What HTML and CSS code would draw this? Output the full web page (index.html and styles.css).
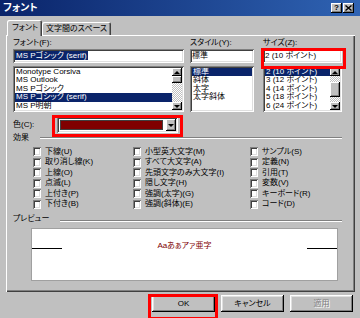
FILE: index.html
```html
<!DOCTYPE html>
<html lang="ja">
<head>
    <meta charset="UTF-8">
    <meta name="viewport" content="width=device-width, initial-scale=1.0">
    <title>フォント</title>
    <link rel="stylesheet" href="styles.css">
</head>
<body>
    <div class="dialog">
        <div class="titlebar">
            <span class="title">フォント</span>
            <div class="title-btns">
                <span class="tbtn">?</span>
                <span class="tbtn">
                    <svg width="7" height="6" viewBox="0 0 7 6"><path d="M0.5 0.5 L6.5 5.5 M6.5 0.5 L0.5 5.5" stroke="#000" stroke-width="1.4"/></svg>
                </span>
            </div>
        </div>

        <div class="tabs">
            <div class="tab active">フォント</div>
            <div class="tab">文字間のスペース</div>
        </div>

        <div class="panel">
            <div class="top-row">
                <div class="col col-font">
                    <div class="label">フォント(F):</div>
                    <div class="field"><span class="sel-text">MS Pゴシック (serif)</span></div>
                    <div class="listbox">
                        <ul class="items">
                            <li>Monotype Corsiva</li>
                            <li>MS Outlook</li>
                            <li>MS Pゴシック</li>
                            <li class="sel">MS Pゴシック (serif)</li>
                            <li>MS P明朝</li>
                        </ul>
                        <div class="scrollbar">
                            <div class="sb-btn up"></div>
                            <div class="sb-track"><div class="sb-thumb thumb-font"></div></div>
                            <div class="sb-btn down"></div>
                        </div>
                    </div>
                </div>

                <div class="col col-style">
                    <div class="label">スタイル(Y):</div>
                    <div class="field">標準</div>
                    <div class="listbox">
                        <ul class="items">
                            <li class="sel">標準</li>
                            <li>斜体</li>
                            <li>太字</li>
                            <li>太字斜体</li>
                        </ul>
                    </div>
                </div>

                <div class="col col-size">
                    <div class="label">サイズ(Z):</div>
                    <div class="field hl-wrap">2 (10 ポイント)<span class="hl hl-size"></span></div>
                    <div class="listbox">
                        <ul class="items">
                            <li class="sel">2 (10 ポイント)</li>
                            <li>3 (12 ポイント)</li>
                            <li>4 (14 ポイント)</li>
                            <li>5 (18 ポイント)</li>
                            <li>6 (24 ポイント)</li>
                        </ul>
                        <div class="scrollbar">
                            <div class="sb-btn up"></div>
                            <div class="sb-track"><div class="sb-thumb thumb-size"></div></div>
                            <div class="sb-btn down"></div>
                        </div>
                    </div>
                </div>
            </div>

            <div class="color-row">
                <span class="color-label">色(C):</span>
                <div class="combo hl-wrap">
                    <div class="swatch"></div>
                    <div class="combo-btn"></div>
                    <span class="hl hl-color"></span>
                </div>
            </div>

            <div class="group-head">
                <span class="group-label effects-label">効果</span>
                <span class="etched"></span>
            </div>

            <div class="effects">
                <label class="cb"><span class="box"></span>下線(U)</label>
                <label class="cb"><span class="box"></span>小型英大文字(M)</label>
                <label class="cb"><span class="box"></span>サンプル(S)</label>
                <label class="cb"><span class="box"></span>取り消し線(K)</label>
                <label class="cb"><span class="box"></span>すべて大文字(A)</label>
                <label class="cb"><span class="box"></span>定義(N)</label>
                <label class="cb"><span class="box"></span>上線(O)</label>
                <label class="cb"><span class="box"></span>先頭文字のみ大文字(I)</label>
                <label class="cb"><span class="box"></span>引用(T)</label>
                <label class="cb"><span class="box"></span>点滅(L)</label>
                <label class="cb"><span class="box"></span>隠し文字(H)</label>
                <label class="cb"><span class="box"></span>変数(V)</label>
                <label class="cb"><span class="box"></span>上付き(P)</label>
                <label class="cb"><span class="box"></span>強調(太字)(G)</label>
                <label class="cb"><span class="box"></span>キーボード(R)</label>
                <label class="cb"><span class="box"></span>下付き(B)</label>
                <label class="cb"><span class="box"></span>強調(斜体)(E)</label>
                <label class="cb"><span class="box"></span>コード(D)</label>
            </div>

            <div class="group-head preview-head">
                <span class="group-label preview-label">プレビュー</span>
                <span class="etched"></span>
            </div>

            <div class="preview">
                <div class="pv-row">
                    <span class="pv-line"></span>
                    <span class="pv-text">Aaあぁアァ亜字</span>
                    <span class="pv-line"></span>
                </div>
            </div>
        </div>

        <div class="buttons">
            <div class="btn hl-wrap">OK<span class="hl hl-ok"></span></div>
            <div class="btn">キャンセル</div>
            <div class="btn disabled">適用</div>
        </div>
    </div>
</body>
</html>
```

FILE: styles.css
```css
* {
    box-sizing: border-box;
}

body {
    margin: 0;
    background: #c0c0c0;
    color: #000;
    font-family: "Liberation Sans", "Noto Sans CJK JP", sans-serif;
    font-size: 8px;
    line-height: 10px;
    font-feature-settings: "palt";
    overflow: hidden;
}

.dialog {
    width: 360px;
    height: 318px;
    background: #c0c0c0;
    overflow: hidden;
}

/* title bar */
.titlebar {
    height: 16px;
    display: flex;
    align-items: center;
    justify-content: space-between;
    padding: 0 6px 0 3px;
    background: linear-gradient(90deg, #0a246a, #2f63b3);
}

.title {
    color: #fff;
    font-weight: bold;
    font-size: 10px;
}

.title-btns {
    display: flex;
    gap: 1px;
}

.tbtn {
    width: 11px;
    height: 10px;
    display: flex;
    align-items: center;
    justify-content: center;
    background: #c0c0c0;
    font-weight: bold;
    font-size: 8px;
    line-height: 8px;
    box-shadow: inset -1px -1px #000, inset 1px 1px #fff, inset -2px -2px #808080;
}

/* tabs */
.tabs {
    height: 19px;
    display: flex;
    align-items: flex-end;
    padding-left: 7px;
    position: relative;
    z-index: 1;
}

.tab {
    width: 69px;
    height: 13px;
    line-height: 12px;
    padding: 1px 0 0 4px;
    white-space: nowrap;
    background: #c0c0c0;
    border-radius: 2px 2px 0 0;
    box-shadow: inset 1px 1px #fff, inset -1px 0 #404040, inset -2px 0 #808080;
}

.tab.active {
    width: 35px;
    height: 16px;
    padding: 2px 0 0 5px;
    margin-bottom: -1px;
}

/* tab page */
.panel {
    margin-left: 6px;
    width: 349px;
    height: 257px;
    padding: 2px 13px 0 7px;
    box-shadow: inset 1px 1px #fff, inset -1px -1px #404040, inset -2px -2px #808080;
}

.top-row {
    display: flex;
}

.col-font {
    width: 171px;
}

.col-style {
    width: 64px;
    margin-left: 6px;
}

.col-size {
    width: 79px;
    margin-left: 9px;
}

.label {
    height: 12px;
    line-height: 12px;
    white-space: nowrap;
}

.field {
    height: 14px;
    padding: 2px;
    line-height: 10px;
    background: #fff;
    white-space: nowrap;
    box-shadow: inset 1px 1px #808080, inset -1px -1px #fff, inset 2px 2px #404040, inset -2px -2px #dfdfdf;
}

.sel-text {
    background: #0a246a;
    color: #fff;
    padding: 0 1px;
}

.listbox {
    margin-top: 3px;
    height: 46px;
    padding: 2px;
    display: flex;
    background: #fff;
    box-shadow: inset 1px 1px #808080, inset -1px -1px #fff, inset 2px 2px #404040, inset -2px -2px #dfdfdf;
}

.items {
    flex: 1;
    list-style: none;
    margin: 0;
    padding: 0;
    overflow: hidden;
}

.items li {
    height: 8.4px;
    line-height: 8.4px;
    padding-left: 1px;
    white-space: nowrap;
}

.items li.sel {
    background: #0a246a;
    color: #fff;
}

.scrollbar {
    width: 10px;
    display: flex;
    flex-direction: column;
}

.sb-btn {
    height: 8px;
    display: flex;
    align-items: center;
    justify-content: center;
    background: #c0c0c0;
    box-shadow: inset -1px -1px #000, inset 1px 1px #fff, inset -2px -2px #808080;
}

.sb-btn::after {
    content: "";
    border-left: 3px solid transparent;
    border-right: 3px solid transparent;
}

.sb-btn.up::after {
    border-bottom: 3px solid #000;
}

.sb-btn.down::after {
    border-top: 3px solid #000;
}

.sb-track {
    flex: 1;
    background: repeating-conic-gradient(#c0c0c0 0 25%, #fff 0 50%) 0 0 / 2px 2px;
}

.sb-thumb {
    background: #c0c0c0;
    box-shadow: inset -1px -1px #000, inset 1px 1px #fff, inset -2px -2px #808080;
}

.thumb-font {
    height: 7px;
}

.thumb-size {
    height: 15px;
    margin-top: 6px;
}

/* red highlight marks */
.hl-wrap {
    position: relative;
}

.hl {
    position: absolute;
    border: 3px solid #f00;
    pointer-events: none;
}

.hl-size {
    top: -1px;
    left: -2px;
    right: -4px;
    bottom: -6px;
}

.hl-color {
    top: -2px;
    left: -5px;
    right: -5px;
    bottom: -4px;
}

.hl-ok {
    top: -1px;
    left: -4px;
    right: -3px;
    bottom: -8px;
}

/* colour */
.color-row {
    margin-top: 5px;
    display: flex;
    align-items: center;
}

.color-label {
    width: 44px;
}

.combo {
    width: 121px;
    height: 16px;
    padding: 3px 2px 2px 3px;
    display: flex;
    gap: 3px;
    background: #fff;
    box-shadow: inset 1px 1px #808080, inset -1px -1px #fff, inset 2px 2px #404040, inset -2px -2px #dfdfdf;
}

.swatch {
    flex: 1;
    margin-bottom: 1px;
    background: #800000;
    border: 1px solid #404040;
}

.combo-btn {
    width: 10px;
    margin-top: -1px;
    display: flex;
    align-items: center;
    justify-content: center;
    background: #c0c0c0;
    box-shadow: inset -1px -1px #000, inset 1px 1px #fff, inset -2px -2px #808080;
}

.combo-btn::after {
    content: "";
    border-left: 3px solid transparent;
    border-right: 3px solid transparent;
    border-top: 3px solid #000;
}

/* group headers */
.group-head {
    height: 10px;
    display: flex;
    align-items: center;
}

.etched {
    flex: 1;
    height: 2px;
    border-top: 1px solid #808080;
    border-bottom: 1px solid #fff;
}

.effects-label {
    width: 27px;
}

.preview-head {
    margin-top: 3.5px;
    height: 11px;
}

.preview-head .etched {
    margin-top: 4px;
}

.preview-label {
    width: 47px;
}

/* effects */
.effects {
    margin: 3.5px 0 0 20px;
    display: grid;
    grid-template-columns: 100px 117px 1fr;
    grid-auto-rows: 10.5px;
}

.cb {
    display: flex;
    align-items: center;
    gap: 4px;
    white-space: nowrap;
}

.box {
    width: 8px;
    height: 9px;
    background: #fff;
    box-shadow: inset 1px 1px #808080, inset -1px -1px #fff, inset 2px 2px #404040, inset -2px -2px #dfdfdf;
}

/* preview */
.preview {
    margin: 4px 4px 0 18px;
    height: 53px;
    background: #fff;
    border: 1px solid #a0a0a0;
}

.pv-row {
    margin-top: 14px;
    height: 6px;
    display: flex;
    align-items: flex-end;
}

.pv-line {
    width: 30px;
    height: 1px;
    background: #000;
}

.pv-text {
    flex: 1;
    align-self: center;
    text-align: center;
    line-height: 6px;
    color: #800000;
}

/* buttons */
.buttons {
    margin-top: 3px;
    padding-right: 7px;
    display: flex;
    justify-content: flex-end;
    gap: 6px;
}

.btn {
    width: 63px;
    height: 17px;
    line-height: 17px;
    text-align: center;
    background: #c0c0c0;
    box-shadow: inset -1px -1px #000, inset 1px 1px #fff, inset -2px -2px #808080, inset 2px 2px #dfdfdf;
}

.btn.disabled {
    color: #808080;
    text-shadow: 1px 1px #fff;
}
```
